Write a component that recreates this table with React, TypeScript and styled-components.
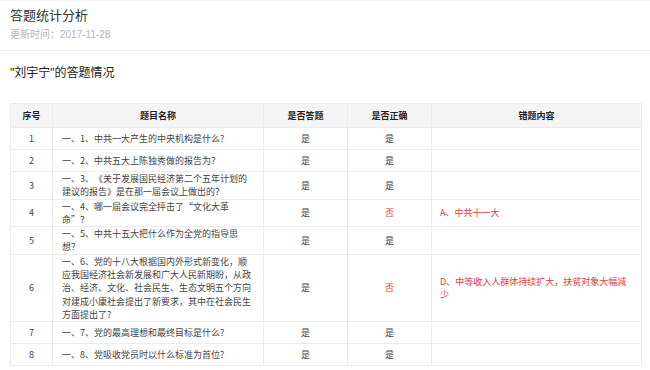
import React from 'react'
import styled, { createGlobalStyle } from 'styled-components'

const GlobalStyle = createGlobalStyle`
    html, body {
        margin: 0;
        padding: 0;
        background: #fff;
        font-family: "Liberation Sans", "Noto Sans CJK SC", sans-serif;
    }
`

type Row = {
    no: number
    title: string
    answered: boolean
    correct: boolean
    wrong?: string
}

const rows: Row[] = [
    { no: 1, title: '一、1、中共一大产生的中央机构是什么?', answered: true, correct: true },
    { no: 2, title: '一、2、中共五大上陈独秀做的报告为？', answered: true, correct: true },
    { no: 3, title: '一、3、《关于发展国民经济第二个五年计划的建议的报告》是在那一届会议上做出的？', answered: true, correct: true },
    { no: 4, title: '一、4、哪一届会议完全抨击了“文化大革命”？', answered: true, correct: false, wrong: 'A、中共十一大' },
    { no: 5, title: '一、5、中共十五大把什么作为全党的指导思想？', answered: true, correct: true },
    {
        no: 6,
        title: '一、6、党的十八大根据国内外形式新变化，顺应我国经济社会新发展和广大人民新期盼，从政治、经济、文化、社会民生、生态文明五个方向对建成小康社会提出了新要求，其中在社会民生方面提出了?',
        answered: true,
        correct: false,
        wrong: 'D、中等收入人群体持续扩大，扶贫对象大幅减少',
    },
    { no: 7, title: '一、7、党的最高理想和最终目标是什么?', answered: true, correct: true },
    { no: 8, title: '一、8、党吸收党员时以什么标准为首位?', answered: true, correct: true },
]

const App = () => {
    return (
        <Page>
            <GlobalStyle />
            <Header>
                <Title>答题统计分析</Title>
                <Updated>更新时间：2017-11-28</Updated>
            </Header>

            <Heading>"刘宇宁"的答题情况</Heading>

            <Table>
                <colgroup>
                    <col style={{ width: 42 }} />
                    <col style={{ width: 211 }} />
                    <col style={{ width: 84 }} />
                    <col style={{ width: 84 }} />
                    <col style={{ width: 210 }} />
                </colgroup>
                <thead>
                    <tr>
                        <Th>序号</Th>
                        <Th>题目名称</Th>
                        <Th>是否答题</Th>
                        <Th>是否正确</Th>
                        <Th>错题内容</Th>
                    </tr>
                </thead>
                <tbody>
                    {rows.map(row => (
                        <tr key={row.no}>
                            <Td $center>{row.no}</Td>
                            <QuestionTd>{row.title}</QuestionTd>
                            <Td $center>{row.answered ? '是' : '否'}</Td>
                            <Td $center $error={!row.correct}>{row.correct ? '是' : '否'}</Td>
                            <Td $error>{row.wrong}</Td>
                        </tr>
                    ))}
                </tbody>
            </Table>
        </Page>
    )
}

export default App

const Page = styled.div`
    width: 650px;
    height: 370px;
    overflow: hidden;
    border-top: 1px solid #f2f2f2;
    box-sizing: border-box;
    color: #333;
`

const Header = styled.div`
    padding: 6px 10px 8px;
    border-bottom: 1px solid #f0f0f0;
`

const Title = styled.div`
    font-size: 13px;
    line-height: 18px;
    color: #333;
`

const Updated = styled.div`
    margin-top: 3px;
    font-size: 10px;
    line-height: 14px;
    color: #b5b5b5;
`

const Heading = styled.div`
    margin: 13px 10px 0;
    font-size: 12px;
    line-height: 18px;
    color: #222;
`

const Table = styled.table`
    margin: 21px 0 0 10px;
    width: 631px;
    border-collapse: collapse;
    table-layout: fixed;
    font-family: "Noto Sans CJK SC", "Liberation Sans", sans-serif;
    font-size: 9px;
    line-height: 13.3px;
    border: 1px solid #e8e8e8;
    text-spacing-trim: space-all;
`

const Th = styled.th`
    height: 23px;
    padding: 0 8px;
    background: #f5f5f5;
    font-weight: bold;
    color: #222;
    text-align: center;
    border: 1px solid #ececec;
`

const Td = styled.td<{ $center?: boolean; $error?: boolean }>`
    height: 21px;
    padding: 0 8px;
    text-align: ${p => (p.$center ? 'center' : 'left')};
    vertical-align: middle;
    color: ${p => (p.$error ? '#e8383d' : '#444')};
    border: 1px solid #ececec;
`

const QuestionTd = styled(Td)`
    padding: 0 11px 0 9px;
`
